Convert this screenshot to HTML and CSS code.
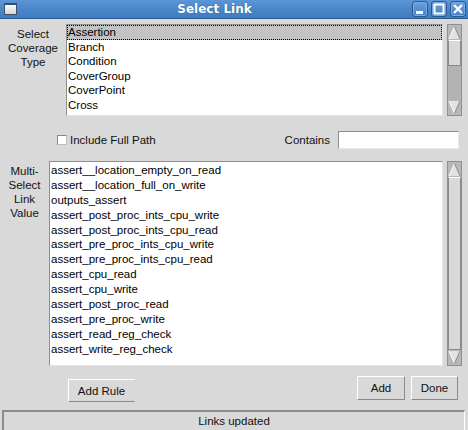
FILE: index.html
```html
<!DOCTYPE html>
<html>
<head>
<meta charset="utf-8">
<link rel="stylesheet" href="styles.css">
</head>
<body>
<div class="window">
  <div class="titlebar">
    <span class="app-icon"></span>
    <span class="title">Select Link</span>
    <div class="wm-buttons">
      <span class="wm-btn"><svg width="14" height="14" viewBox="0 0 14 14"><rect x="3" y="9" width="7" height="3" fill="#fff"/></svg></span>
      <span class="wm-btn"><svg width="14" height="14" viewBox="0 0 14 14"><rect x="2.5" y="2.5" width="9" height="9" fill="none" stroke="#fff" stroke-width="2"/></svg></span>
      <span class="wm-btn"><svg width="14" height="14" viewBox="0 0 14 14"><path d="M3 3 L11 11 M11 3 L3 11" stroke="#fff" stroke-width="2.4"/></svg></span>
    </div>
  </div>

  <div class="row row-type">
    <div class="label label-type">Select<br>Coverage<br>Type</div>
    <div class="listbox list-type">
      <div class="item selected">Assertion</div>
      <div class="item">Branch</div>
      <div class="item">Condition</div>
      <div class="item">CoverGroup</div>
      <div class="item">CoverPoint</div>
      <div class="item">Cross</div>
    </div>
    <div class="scrollbar sb-type">
      <div class="arrow"><svg width="13" height="15" viewBox="0 0 13 15"><polygon points="6.5,1.5 1,14 12,14" fill="#e2e2e2"/><path d="M6.5 1.5 L1 14" stroke="#fff" stroke-width="1"/><path d="M6.5 1.5 L12 14" stroke="#8a8a8a" stroke-width="1"/></svg></div>
      <div class="thumb thumb-type"></div>
      <div class="trough"></div>
      <div class="arrow"><svg width="13" height="15" viewBox="0 0 13 15"><polygon points="1,1 12,1 6.5,13.5" fill="#e2e2e2"/><path d="M1 1 L6.5 13.5" stroke="#fff" stroke-width="1"/><path d="M12 1 L6.5 13.5" stroke="#8a8a8a" stroke-width="1"/></svg></div>
    </div>
  </div>

  <div class="row row-filter">
    <span class="checkbox"></span>
    <span class="check-label">Include Full Path</span>
    <span class="spacer"></span>
    <span class="contains-label">Contains</span>
    <input class="entry" type="text">
  </div>

  <div class="row row-value">
    <div class="label label-value">Multi-<br>Select<br>Link<br>Value</div>
    <div class="listbox list-value">
      <div class="item">assert__location_empty_on_read</div>
      <div class="item">assert__location_full_on_write</div>
      <div class="item">outputs_assert</div>
      <div class="item">assert_post_proc_ints_cpu_write</div>
      <div class="item">assert_post_proc_ints_cpu_read</div>
      <div class="item">assert_pre_proc_ints_cpu_write</div>
      <div class="item">assert_pre_proc_ints_cpu_read</div>
      <div class="item">assert_cpu_read</div>
      <div class="item">assert_cpu_write</div>
      <div class="item">assert_post_proc_read</div>
      <div class="item">assert_pre_proc_write</div>
      <div class="item">assert_read_reg_check</div>
      <div class="item">assert_write_reg_check</div>
    </div>
    <div class="scrollbar sb-value">
      <div class="arrow"><svg width="13" height="15" viewBox="0 0 13 15"><polygon points="6.5,1.5 1,14 12,14" fill="#e2e2e2"/><path d="M6.5 1.5 L1 14" stroke="#fff" stroke-width="1"/><path d="M6.5 1.5 L12 14" stroke="#8a8a8a" stroke-width="1"/></svg></div>
      <div class="thumb thumb-value"></div>
      <div class="arrow"><svg width="13" height="15" viewBox="0 0 13 15"><polygon points="1,1 12,1 6.5,13.5" fill="#e2e2e2"/><path d="M1 1 L6.5 13.5" stroke="#fff" stroke-width="1"/><path d="M12 1 L6.5 13.5" stroke="#8a8a8a" stroke-width="1"/></svg></div>
    </div>
  </div>

  <div class="row row-buttons">
    <button class="btn btn-rule">Add Rule</button>
    <span class="spacer"></span>
    <button class="btn btn-add">Add</button>
    <button class="btn btn-done">Done</button>
  </div>

  <div class="status">Links updated</div>
</div>
</body>
</html>
```

FILE: styles.css
```css
html, body {
  margin: 0;
  padding: 0;
}
body {
  width: 468px;
  height: 430px;
  overflow: hidden;
  background: #d9d9d9;
  font-family: "Liberation Sans", Arial, sans-serif;
  font-size: 11.5px;
  color: #000;
}
.window {
  width: 468px;
  height: 430px;
  display: flex;
  flex-direction: column;
}
.titlebar {
  height: 20px;
  border-bottom: 1px solid #2b5b93;
  background: linear-gradient(#5c96d6, #4a86c9 50%, #3f7bbf);
  display: flex;
  align-items: center;
}
.app-icon {
  width: 11px;
  height: 9px;
  margin-left: 4px;
  margin-top: -1px;
  background: linear-gradient(#fafafa, #d6d6d6);
  border: 1px solid #3b4f66;
  border-top-width: 2px;
}
.title {
  flex: 1;
  text-align: center;
  font-family: "DejaVu Sans", sans-serif;
  font-weight: bold;
  font-size: 12px;
  color: #fff;
  text-shadow: 0 0 1px #24507f;
}
.wm-buttons {
  display: flex;
  gap: 3px;
  margin-right: 2px;
}
.wm-btn {
  width: 14px;
  height: 14px;
  border: 1px solid #2a5890;
  border-radius: 3px;
  background: linear-gradient(#6aa2df, #4580c4);
  box-shadow: inset 0 0 0 1px #78ace6;
  display: flex;
}
.row {
  display: flex;
}
.label {
  text-align: center;
  line-height: 14px;
  color: #111;
}
.row-type {
  margin-top: 5px;
  height: 92px;
}
.label-type {
  width: 66px;
  padding-top: 3px;
}
.listbox {
  background: #fff;
  border-top: 1px solid #8e8e8e;
  border-left: 1px solid #8e8e8e;
  border-right: 1px solid #e6e6e6;
  border-bottom: 1px solid #e6e6e6;
  box-sizing: border-box;
  overflow: hidden;
}
.list-type {
  width: 377px;
  height: 92px;
}
.list-type .item {
  height: 14.6px;
  line-height: 15.6px;
  padding-left: 1px;
  white-space: nowrap;
}
.item.selected {
  background: #c3c3c3;
  outline: 1px dotted #000;
  outline-offset: -1px;
}
.scrollbar {
  width: 15px;
  margin-left: 4px;
  border: 1px solid #8f8f8f;
  box-sizing: border-box;
  display: flex;
  flex-direction: column;
  background: #b3b3b3;
}
.sb-type {
  height: 92px;
}
.arrow {
  height: 15px;
  background: #b8b8b8;
  display: flex;
}
.thumb {
  background: #d9d9d9;
  border-top: 1px solid #fff;
  border-bottom: 1px solid #8a8a8a;
  border-left: 1px solid #8a8a8a;
  border-right: 1px solid #8a8a8a;
  box-sizing: border-box;
}
.thumb-type {
  height: 26px;
}
.trough {
  flex: 1;
  background: #b3b3b3;
}
.row-filter {
  margin-top: 15px;
  height: 18px;
  align-items: center;
}
.checkbox {
  width: 8px;
  height: 8px;
  margin-left: 57px;
  background: #fff;
  border-top: 1px solid #8a8a8a;
  border-left: 1px solid #8a8a8a;
  border-right: 1px solid #bdbdbd;
  border-bottom: 1px solid #bdbdbd;
}
.check-label {
  margin-left: 3px;
  color: #111;
}
.spacer {
  flex: 1;
}
.contains-label {
  color: #111;
  margin-right: 8px;
}
.entry {
  width: 121px;
  height: 18px;
  box-sizing: border-box;
  margin: 0 9px 0 0;
  padding: 0;
  background: #fff;
  border-top: 1px solid #8e8e8e;
  border-left: 1px solid #8e8e8e;
  border-right: 1px solid #e8e8e8;
  border-bottom: 1px solid #e8e8e8;
  outline: none;
}
.row-value {
  margin-top: 12px;
  height: 205px;
}
.label-value {
  width: 49px;
  padding-top: 3px;
}
.list-value {
  width: 394px;
  height: 205px;
  padding-top: 1px;
}
.list-value .item {
  height: 14.9px;
  line-height: 15.5px;
  padding-left: 1px;
  white-space: nowrap;
}
.sb-value {
  height: 205px;
}
.thumb-value {
  flex: 1;
}
.row-buttons {
  margin-top: 10px;
  height: 26px;
  align-items: flex-start;
}
.btn {
  font-family: "Liberation Sans", Arial, sans-serif;
  font-size: 11.5px;
  color: #111;
  background: #d9d9d9;
  box-sizing: border-box;
  padding: 0;
  margin: 0;
  border-top: 1px solid #fff;
  border-left: 1px solid #fff;
  border-right: 1px solid #8a8a8a;
  border-bottom: 1px solid #8a8a8a;
  border-radius: 0;
}
.btn-rule {
  width: 67px;
  height: 23px;
  margin-left: 68px;
  margin-top: 3px;
  border-right-color: #d9d9d9;
}
.btn-add {
  width: 48px;
  height: 24px;
}
.btn-done {
  width: 47px;
  height: 24px;
  margin-left: 6px;
  margin-right: 10px;
}
.status {
  margin: 8px 3px 0 2px;
  height: 20px;
  box-sizing: border-box;
  border-top: 2px solid #8a8a8a;
  border-left: 2px solid #8a8a8a;
  border-right: 1px solid #fff;
  text-align: center;
  line-height: 18px;
  color: #111;
}
```
